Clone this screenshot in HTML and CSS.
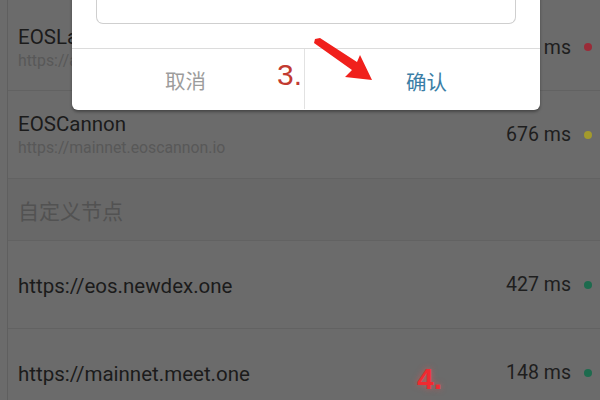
FILE: index.html
```html
<!DOCTYPE html>
<html lang="zh-CN">
<head>
    <meta charset="UTF-8">
    <title>节点选择</title>
    <link rel="stylesheet" href="styles.css">
</head>
<body>

<div class="screen">
    <div class="node-list">
        <div class="node first">
            <div class="node-info">
                <div class="node-name">EOSLaomao</div>
                <div class="node-url">https://api.eoslaomao.com</div>
            </div>
            <div class="node-ping">
                <span>392 ms</span>
                <span class="dot red"></span>
            </div>
        </div>
        <div class="node">
            <div class="node-info">
                <div class="node-name">EOSCannon</div>
                <div class="node-url">https://mainnet.eoscannon.io</div>
            </div>
            <div class="node-ping">
                <span>676 ms</span>
                <span class="dot yellow"></span>
            </div>
        </div>

        <div class="section-title">自定义节点</div>

        <div class="node single">
            <div class="node-info">
                <div class="node-name">https://eos.newdex.one</div>
            </div>
            <div class="node-ping">
                <span>427 ms</span>
                <span class="dot green"></span>
            </div>
        </div>
        <div class="node single">
            <div class="node-info">
                <div class="node-name">https://mainnet.meet.one</div>
            </div>
            <div class="node-ping">
                <span>148 ms</span>
                <span class="dot green"></span>
            </div>
        </div>
    </div>

    <!-- dialog sits over the dimmed list -->
    <div class="dialog">
        <div class="dialog-body">
            <div class="dialog-input"></div>
        </div>
        <div class="dialog-actions">
            <div class="btn cancel">取消</div>
            <div class="btn confirm">确认</div>
        </div>
    </div>

    <div class="step step-3">3.</div>
    <div class="step step-4">4.</div>

    <svg class="arrow" width="70" height="50" viewBox="0 0 70 50">
        <polygon points="1,1 6,0 43,24 46,17 58,42 31,39 38,32 0,5" fill="#f0201c"/>
    </svg>
</div>

</body>
</html>
```

FILE: styles.css
```css
* {
    margin: 0;
    padding: 0;
    box-sizing: border-box;
}

body {
    width: 600px;
    height: 400px;
    overflow: hidden;
    background: #6b6b6b;
    font-family: Roboto, "Noto Sans CJK SC", sans-serif;
}

.screen {
    position: relative;
    width: 600px;
    height: 400px;
    overflow: hidden;
}

.node-list {
    height: 100%;
    margin-left: 7px;
    border-left: 1px solid #5f5f5f;
}

.node {
    display: flex;
    align-items: center;
    justify-content: space-between;
    height: 88px;
    padding: 0 8px 0 10px;
    border-bottom: 1px solid #626262;
}

.node.first {
    height: 91px;
    padding-top: 4px;
}

.node-name {
    font-size: 20.5px;
    color: #1b1b1b;
    line-height: 22px;
}

.node-url {
    margin-top: 5px;
    font-size: 15.8px;
    color: #585858;
    line-height: 16px;
}

.node.single .node-info {
    padding-top: 2px;
}

.node-ping {
    display: flex;
    align-items: center;
    gap: 13px;
    font-size: 19.5px;
    color: #1e1e1e;
}

.dot {
    width: 8px;
    height: 8px;
    border-radius: 50%;
}

.dot.red {
    background: #9a2b38;
}

.dot.yellow {
    background: #a39a2c;
}

.dot.green {
    background: #1d6b4e;
}

.section-title {
    height: 62px;
    line-height: 62px;
    padding-left: 10px;
    font-size: 21px;
    color: #525252;
    background: #686868;
    border-bottom: 1px solid #626262;
    font-family: "Noto Sans CJK SC", sans-serif;
}

.dialog {
    position: absolute;
    left: 72px;
    top: -40px;
    width: 468px;
    height: 150px;
    background: #fff;
    border-radius: 6px;
    box-shadow: 0 2px 3px rgba(0, 0, 0, 0.35);
}

.dialog-body {
    height: 89px;
    padding: 0 24px;
    border-bottom: 1px solid #dcdcdc;
}

.dialog-input {
    height: 64px;
    border: 1px solid #cfcfcf;
    border-top: 0;
    border-radius: 0 0 7px 7px;
}

.dialog-actions {
    display: flex;
    height: 60px;
}

.btn {
    flex: 1;
    display: flex;
    align-items: center;
    justify-content: center;
    font-size: 20.5px;
    line-height: 1;
    font-family: "Noto Sans CJK SC", sans-serif;
}

.btn.cancel {
    color: #9c9c9c;
    border-right: 1px solid #e2e2e2;
    padding-top: 2px;
    padding-right: 5px;
}

.btn.confirm {
    color: #3b7ea6;
    padding-top: 4px;
    padding-left: 8px;
}

.step {
    position: absolute;
    font-family: "Liberation Sans", sans-serif;
    font-size: 30px;
    line-height: 30px;
}

.step-3 {
    left: 277px;
    top: 60px;
    color: #c23a30;
}

.step-4 {
    left: 417px;
    top: 364px;
    color: #f02a30;
    font-weight: bold;
    text-shadow: 0 0 6px rgba(255, 80, 80, 0.6);
}

.arrow {
    position: absolute;
    left: 314px;
    top: 38px;
}
```
